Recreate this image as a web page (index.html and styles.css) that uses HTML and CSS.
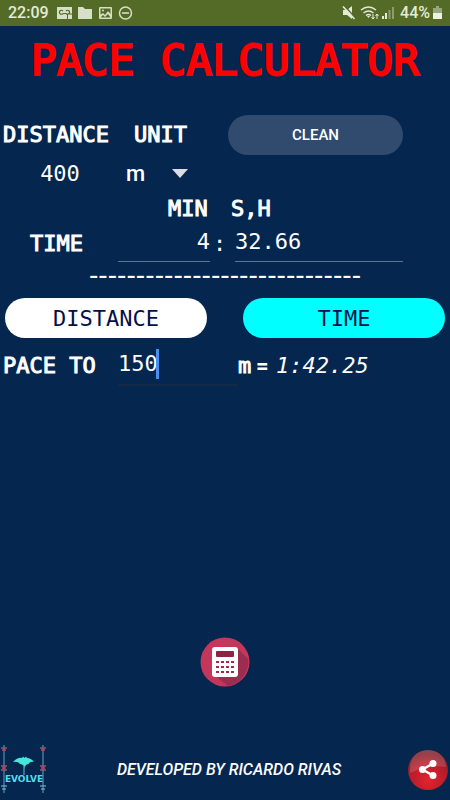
FILE: index.html
```
<!DOCTYPE html>
<html lang="en">
<head>
  <meta charset="UTF-8">
  <meta name="viewport" content="width=device-width, initial-scale=1.0">
  <title>Pace Calculator</title>
  <link rel="stylesheet" href="styles.css">
</head>
<body>

  <!-- STATUS BAR -->
  <div class="status-bar">
    <span class="clock">22:09</span>
    <svg class="status-left" width="78" height="14" viewBox="0 0 78 14" fill="#d7dfc6">
      <path d="M0 1h15v12H0z"/>
      <path d="M6 7.500a2 2 0 1 1 0-2.500M6 7.500h3a2 2 0 1 0 0-2.500" fill="none" stroke="#546a27" stroke-width="1.200"/>
      <path d="M10.500 8h5v5.500h-5z" stroke="#546a27" stroke-width="1"/>
      <path d="M21 1h5l2 2h7v10H21z"/>
      <path d="M43 1h11q1 0 1 1v10q0 1-1 1H43q-1 0-1-1V2q0-1 1-1zm.500 1.500v6L46 7l2 2 3-4 2.500 3V2.500zm0 9h10L51 8l-3 3-2-2z" fill-rule="evenodd"/>
      <circle cx="46" cy="4.500" r="1"/>
      <circle cx="68.500" cy="7" r="6" fill="none" stroke="#d7dfc6" stroke-width="1.500"/>
      <path d="M65 6.200h7v1.600h-7z"/>
    </svg>
    <svg class="status-right" width="53" height="14" viewBox="0 0 53 14" fill="#e4ead8">
      <path d="M1 4h4l5-4v13L5 9H1z"/>
      <path d="M2.500 0l11 12" stroke="#546a27" stroke-width="1.500"/>
      <path d="M1 .500l11.500 12.500" stroke="#e4ead8" stroke-width="1.600"/>
      <path d="M19 4q7.500-6 15 0M21.500 7q5-4 10 0M24 9.500q2.500-2 5 0" fill="none" stroke="#e4ead8" stroke-width="1.500"/>
      <path d="M25 10h3l-1.500 2z"/>
      <path d="M31 8v5m-1.500-2l1.500 2 1.500-2M35 13V8m-1.500 2L35 8l1.500 2" fill="none" stroke="#e4ead8"/>
      <path d="M40 10h2v3h-2zM43 7h2v6h-2z"/>
      <path d="M46.500 4h2v9h-2zM50 1h2v12h-2z" opacity=".4"/>
    </svg>
    <span class="percent">44%</span>
    <svg width="9" height="14" viewBox="0 0 9 14" fill="#eef2e6">
      <path d="M3 0h3v2h3v5H0V2h3z" opacity=".45"/>
      <path d="M0 7h9v6H0z"/>
    </svg>
  </div>

  <h1>PACE CALCULATOR</h1>

  <main class="calculator">
    <div class="row head-row">
      <label class="heading" for="distance">DISTANCE</label>
      <label class="heading" for="unit">UNIT</label>
      <button class="btn-clean" type="button">CLEAN</button>
    </div>

    <div class="row value-row">
      <input class="distance" type="text" id="distance" value="400">
      <div class="unit-box">
        <select id="unit">
          <option>m</option>
          <option>km</option>
        </select>
        <svg class="arrow" width="16" height="9" viewBox="0 0 16 9"><path d="M0 0h16L8 9z" fill="#dcdce6"/></svg>
      </div>
    </div>

    <div class="row caption-row">
      <label class="heading" for="minutes">MIN</label>
      <label class="heading" for="seconds">S,H</label>
    </div>

    <div class="row time-row">
      <span class="heading">TIME</span>
      <input class="minutes" type="text" id="minutes" value="4">
      <span class="colon">:</span>
      <input type="text" id="seconds" value="32.66">
    </div>

    <div class="divider">-----------------------------</div>

    <div class="modes">
      <button class="btn-mode" type="button">DISTANCE</button>
      <button class="btn-mode active" type="button">TIME</button>
    </div>

    <div class="row pace-row">
      <label class="heading" for="pace">PACE TO</label>
      <div class="pace-box">
        <input type="text" id="pace" value="150">
        <span class="caret"></span>
      </div>
      <span class="heading">m</span>
      <span class="equals">=</span>
      <output class="result" for="pace">1:42.25</output>
    </div>
  </main>

  <button class="btn-calc" type="button" aria-label="Calculate">
    <svg width="50" height="50" viewBox="0 0 50 50">
      <circle cx="25" cy="25" r="24.500" fill="#c4375b"/>
      <path d="M37 11l11 11a24.500 24.500 0 0 1-20 27L14 38z" fill="#9b2d50"/>
      <rect x="12" y="10" width="26" height="30" rx="3" fill="#fff"/>
      <rect x="16" y="14" width="18" height="6" rx="1" fill="#8e2445"/>
      <path d="M16 25h18M16 30h18M16 35h18" stroke="#a12a4e" stroke-width="2" stroke-dasharray="3 2"/>
    </svg>
  </button>

  <footer>
    <svg class="logo" width="48" height="52" viewBox="0 0 48 52">
      <path d="M4 1v48M43 1v48" stroke="#6f9fc0" stroke-width="1"/>
      <path d="M1 4h6M2 6h4M1 22h6M2 24h4M1 26h6M40 4h6M41 6h4M40 22h6M41 24h4M40 26h6" stroke="#a45261" stroke-width="1.500"/>
      <path d="M1 42h6M2 45h4M40 42h6M41 45h4" stroke="#78c9d8" stroke-width="1"/>
      <path d="M13 18q5-5 9-4l1-1.500 1.500 1.500 1.500-1.500 1 1.500q4 0 7 4-4-1-5.500 2-2 0-3 1.500L24.500 25l-1-3.500q-2-2-3.500-1.500-2-3-7-2z" fill="#46e7da"/>
      <path d="M24 22v9" stroke="#478da5" stroke-width="1.500"/>
      <text x="24" y="38" text-anchor="middle">EVOLVE</text>
    </svg>
    <p>DEVELOPED BY RICARDO RIVAS</p>
    <button class="btn-share" type="button" aria-label="Share">
      <svg width="42" height="42" viewBox="0 0 42 42">
        <defs>
          <radialGradient id="red" cx=".5" cy=".75" r=".65">
            <stop offset="0" stop-color="#e0252f"/>
            <stop offset=".7" stop-color="#b81c29"/>
            <stop offset="1" stop-color="#83202d"/>
          </radialGradient>
        </defs>
        <circle cx="21" cy="21" r="20" fill="url(#red)"/>
        <path d="M3 18a18 17 0 0 1 36 0q-17-3-36 6z" fill="#fff" opacity=".15"/>
        <path d="M26 14.500l-10.500 6L26 26.500" fill="none" stroke="#fff" stroke-width="2.500"/>
        <circle cx="26" cy="14.500" r="3.500" fill="#fff"/>
        <circle cx="15.500" cy="20.500" r="3.500" fill="#fff"/>
        <circle cx="26" cy="26.500" r="3.500" fill="#fff"/>
      </svg>
    </button>
  </footer>

</body>
</html>
```
FILE: styles.css
```
* {
  margin: 0;
  padding: 0;
  box-sizing: border-box;
}

body {
  display: flex;
  flex-direction: column;
  min-height: 100vh;
  background: #05264e;
  color: #fff;
  font-family: "DejaVu Sans Mono", monospace;
  font-size: 22px;
  line-height: 26px;
}

button {
  border: none;
  cursor: pointer;
}

input,
select {
  width: 100%;
  border: none;
  outline: none;
  background: none;
  color: #fff;
  font-family: inherit;
  font-size: 22px;
}

.status-bar {
  display: flex;
  align-items: center;
  height: 26px;
  padding: 0 8px;
  background: #546a27;
  color: #e4ead8;
  font-family: Roboto, sans-serif;
  font-size: 16px;
  font-weight: 500;
}

.status-left {
  margin-left: 8px;
}

.status-right {
  margin-left: auto;
}

.percent {
  margin: 0 3px 0 5px;
}

h1 {
  padding: 9px 0 8px;
  color: #f00;
  font-size: 43px;
  font-weight: 400;
  line-height: 50px;
  text-align: center;
  -webkit-text-stroke: 2px #f00;
}

.calculator {
  padding-top: 22px;
}

.row {
  display: grid;
  align-items: center;
  padding: 0 47px 0 3px;
}

.heading {
  -webkit-text-stroke: 1px #fff;
}

.head-row {
  grid-template-columns: 131px 94px 1fr;
}

.btn-clean {
  height: 40px;
  border-radius: 20px;
  background: #304b6d;
  color: #fff;
  font-family: Roboto, sans-serif;
  font-size: 15px;
  font-weight: 500;
}

.value-row {
  grid-template-columns: 114px 80px;
  height: 36px;
}

.distance {
  text-align: center;
}

.unit-box {
  display: flex;
  align-items: center;
  padding-left: 9px;
}

.unit-box select {
  width: 46px;
  flex: none;
  appearance: none;
  font-family: Roboto, sans-serif;
  font-weight: 500;
}

.arrow {
  flex: none;
}

.caption-row {
  grid-template-columns: 63px 1fr;
  height: 35px;
  padding-left: 168px;
}

.time-row {
  grid-template-columns: 88px 92px 25px 1fr;
  padding-left: 30px;
}

.time-row input {
  height: 36px;
  padding-bottom: 4px;
  border-bottom: 1px solid #5e7490;
}

.time-row .minutes {
  text-align: right;
}

.colon {
  padding-left: 3px;
}

.divider {
  height: 36px;
  font-family: "DejaVu Sans", sans-serif;
  font-size: 26px;
  text-align: center;
}

.modes {
  display: grid;
  grid-template-columns: 1fr 1fr;
  gap: 36px;
  padding: 0 5px;
}

.btn-mode {
  height: 40px;
  border-radius: 20px;
  background: #fff;
  color: #05104a;
  font-family: inherit;
  font-size: 22px;
}

.btn-mode.active {
  background: #0ff;
}

.pace-row {
  grid-template-columns: 115px 120px 18px 20px 1fr;
  height: 56px;
}

.pace-box {
  position: relative;
}

.pace-box input {
  display: block;
  height: 40px;
  padding-bottom: 3px;
  border-bottom: 2px solid #132a46;
}

.caret {
  position: absolute;
  top: 3px;
  left: 38px;
  width: 3px;
  height: 30px;
  background: #4a8ff0;
}

.equals {
  font-family: Roboto, sans-serif;
  font-weight: 700;
}

.result {
  font-style: italic;
}

.btn-calc {
  align-self: center;
  height: 50px;
  margin-top: auto;
  border-radius: 50%;
  background: none;
}

footer {
  display: flex;
  align-items: center;
  justify-content: space-between;
  padding: 57px 1px 4px 0;
}

.logo text {
  fill: #52ddec;
  font-family: "DejaVu Sans", sans-serif;
  font-size: 9px;
  font-weight: 700;
}

footer p {
  padding-left: 3px;
  font-family: Roboto, sans-serif;
  font-size: 16px;
  font-style: italic;
  font-weight: 500;
}

.btn-share {
  height: 42px;
  border-radius: 50%;
  background: none;
}
```
